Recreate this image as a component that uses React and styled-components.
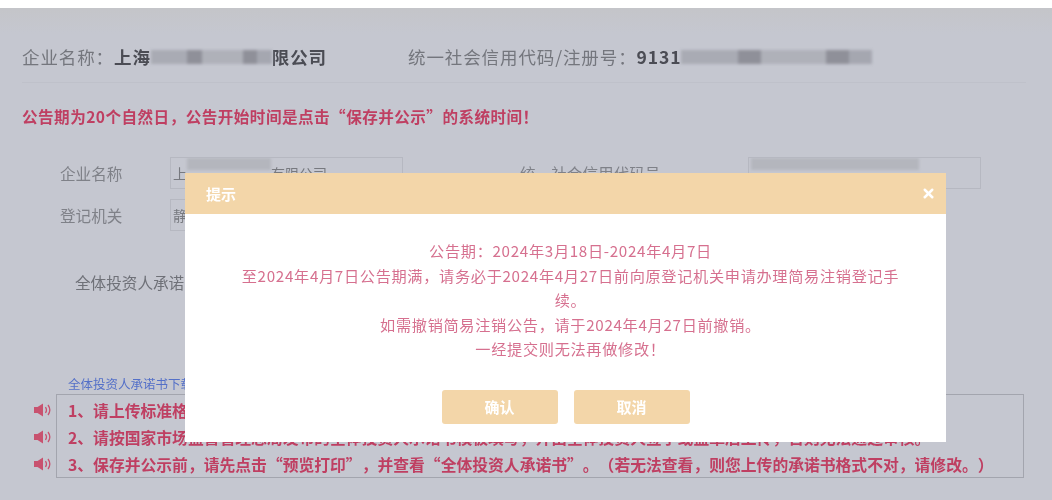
import React from 'react'
import styled, { createGlobalStyle } from 'styled-components'
import { X } from 'lucide-react'

const GlobalStyle = createGlobalStyle`
    html, body {
        margin: 0;
        padding: 0;
        background: #fff;
        font-family: "Noto Sans CJK SC", "Liberation Sans", sans-serif;
        text-spacing-trim: space-all;
    }
`

const Speaker = () => (
    <svg width="20" height="16" viewBox="0 0 20 16" fill="none">
        <path d="M1 5h3.5L10 1.5v13L4.5 11H1z" fill="#c8526f" />
        <path d="M12.5 5c1.2 1.8 1.2 4.2 0 6M15 3c2.2 3 2.2 7 0 10" stroke="#c8526f" strokeWidth="1.3" />
    </svg>
)

const tips = [
    '1、请上传标准格式的全体投资人承诺书。',
    '2、请按国家市场监督管理总局发布的全体投资人承诺书模板填写，并由全体投资人签字或盖章后上传，否则无法通过审核。',
    '3、保存并公示前，请先点击“预览打印”，并查看“全体投资人承诺书”。（若无法查看，则您上传的承诺书格式不对，请修改。）',
]

const App = () => (
    <Shell>
        <GlobalStyle />
        <Panel>
            <HeadRow>
                <HeadItem>
                    企业名称：<strong>上海</strong><Smudge $w={121} /><strong>限公司</strong>
                </HeadItem>
                <HeadItem>
                    统一社会信用代码/注册号：<strong>9131</strong><Smudge $w={191} />
                </HeadItem>
            </HeadRow>
            <Notice>公告期为20个自然日，公告开始时间是点击“保存并公示”的系统时间！</Notice>
            <FormGrid>
                <Label>企业名称</Label>
                <Field>上<Smudge $w={84} $top />有限公司</Field>
                <Label $wide>统一社会信用代码号</Label>
                <Field><Smudge $w={168} $top /></Field>
                <Label>登记机关</Label>
                <Field>静安区市场监督管理局</Field>
            </FormGrid>
            <PromiseLabel>全体投资人承诺书</PromiseLabel>
            <TemplateLink>全体投资人承诺书下载</TemplateLink>
            <TipArea>
                <Icons>
                    {tips.map((t) => <IconCell key={t}><Speaker /></IconCell>)}
                </Icons>
                <TipBox>
                    {tips.map((t) => <Tip key={t}>{t}</Tip>)}
                </TipBox>
            </TipArea>
        </Panel>
        <Modal>
            <ModalHead>
                <span>提示</span>
                <X size={15} strokeWidth={4} color="#fff" />
            </ModalHead>
            <ModalBody>
                <p>公告期：2024年3月18日-2024年4月7日</p>
                <p>至2024年4月7日公告期满，请务必于2024年4月27日前向原登记机关申请办理简易注销登记手续。</p>
                <p>如需撤销简易注销公告，请于2024年4月27日前撤销。</p>
                <p>一经提交则无法再做修改！</p>
            </ModalBody>
            <ModalActions>
                <ModalButton>确认</ModalButton>
                <ModalButton>取消</ModalButton>
            </ModalActions>
        </Modal>
    </Shell>
)

const Shell = styled.div`
    position: relative;
    width: 1052px;
    height: 500px;
    overflow: hidden;
    padding-top: 8px;
    box-sizing: border-box;
    filter: blur(0.7px);
`

const Panel = styled.div`
    height: 492px;
    padding: 0 26px 0 22px;
    box-sizing: border-box;
    background: linear-gradient(#c4c5c9 0, #c5c7d0 26px);
`

const HeadRow = styled.div`
    display: flex;
    align-items: center;
    gap: 81px;
    height: 75px;
    padding-top: 23px;
    box-sizing: border-box;
    border-bottom: 1px solid #bfc1ca;
`

const HeadItem = styled.div`
    display: flex;
    align-items: center;
    font-size: 17.5px;
    letter-spacing: 0.9px;
    color: #74767d;
    white-space: nowrap;

    strong {
        color: #4b4c54;
    }
`

const Smudge = styled.span`
    display: inline-block;
    flex: none;
    width: ${(p) => p.$w}px;
    height: ${(p) => (p.$top ? 12 : 14)}px;
    align-self: ${(p) => (p.$top ? 'flex-start' : 'center')};
    filter: blur(1.5px);
    background: ${(p) => (p.$top
        ? '#b4b6bd'
        : 'linear-gradient(90deg, #a9abb4 0 30%, #8f9099 30% 42%, #afb1b9 42% 76%, #8f9099 76% 88%, #a5a7b0 88%)')};
`

const Notice = styled.div`
    margin-top: 21px;
    font-size: 15.6px;
    letter-spacing: 0.45px;
    line-height: 24px;
    font-weight: 700;
    color: #bf3f62;
`

const FormGrid = styled.div`
    display: grid;
    grid-template-columns: 110px 233px 117px 228px 233px;
    grid-auto-rows: 32px;
    row-gap: 10px;
    margin-top: 29px;
    padding-left: 38px;
    white-space: nowrap;
`

const Label = styled.div`
    grid-column: ${(p) => (p.$wide ? 4 : 'auto')};
    display: flex;
    align-items: center;
    font-size: 15.6px;
    color: #7f8188;
`

const Field = styled.div`
    display: flex;
    align-items: center;
    padding-left: 2px;
    overflow: hidden;
    border: 1px solid #b6b8c1;
    font-size: 14px;
    color: #77797f;
`

const PromiseLabel = styled.div`
    margin: 39px 0 0 53px;
    font-size: 15.6px;
    line-height: 24px;
    color: #6f7178;
`

const TemplateLink = styled.div`
    margin: 81px 0 0 46px;
    font-size: 12.5px;
    line-height: 18px;
    color: #5470c8;
`

const TipArea = styled.div`
    display: flex;
    margin-left: 11px;
    padding-top: 1px;
`

const Icons = styled.div`
    width: 23px;
    padding-top: 2px;
`

const IconCell = styled.div`
    display: flex;
    align-items: center;
    height: 27px;
`

const TipBox = styled.div`
    width: 968px;
    padding: 2px 0 0 11px;
    box-sizing: border-box;
    height: 84px;
    border: 1px solid #a3a5ae;
`

const Tip = styled.div`
    height: 27px;
    line-height: 27px;
    font-size: 15.8px;
    font-weight: 700;
    color: #bf3f62;
    white-space: nowrap;
`

const Modal = styled.div`
    position: absolute;
    left: 185px;
    top: 173px;
    width: 761px;
    height: 269px;
    display: flex;
    flex-direction: column;
    background: #fff;
`

const ModalHead = styled.div`
    display: flex;
    align-items: center;
    justify-content: space-between;
    height: 41px;
    padding: 0 10px 0 21px;
    background: #f3d6a9;
    color: #fff;
    font-size: 15px;
    font-weight: 700;
`

const ModalBody = styled.div`
    margin-top: 24px;
    padding: 0 43px 0 53px;
    font-size: 15.2px;
    letter-spacing: 0.67px;
    line-height: 24.5px;
    color: #d6708f;
    text-align: center;

    p {
        margin: 0;
    }
`

const ModalActions = styled.div`
    display: flex;
    justify-content: center;
    gap: 16px;
    margin-top: 29px;
`

const ModalButton = styled.div`
    width: 116px;
    height: 34px;
    line-height: 34px;
    border-radius: 3px;
    background: #f3d6a9;
    color: #fff;
    font-size: 15px;
    font-weight: 700;
    text-align: center;
`

export default App
